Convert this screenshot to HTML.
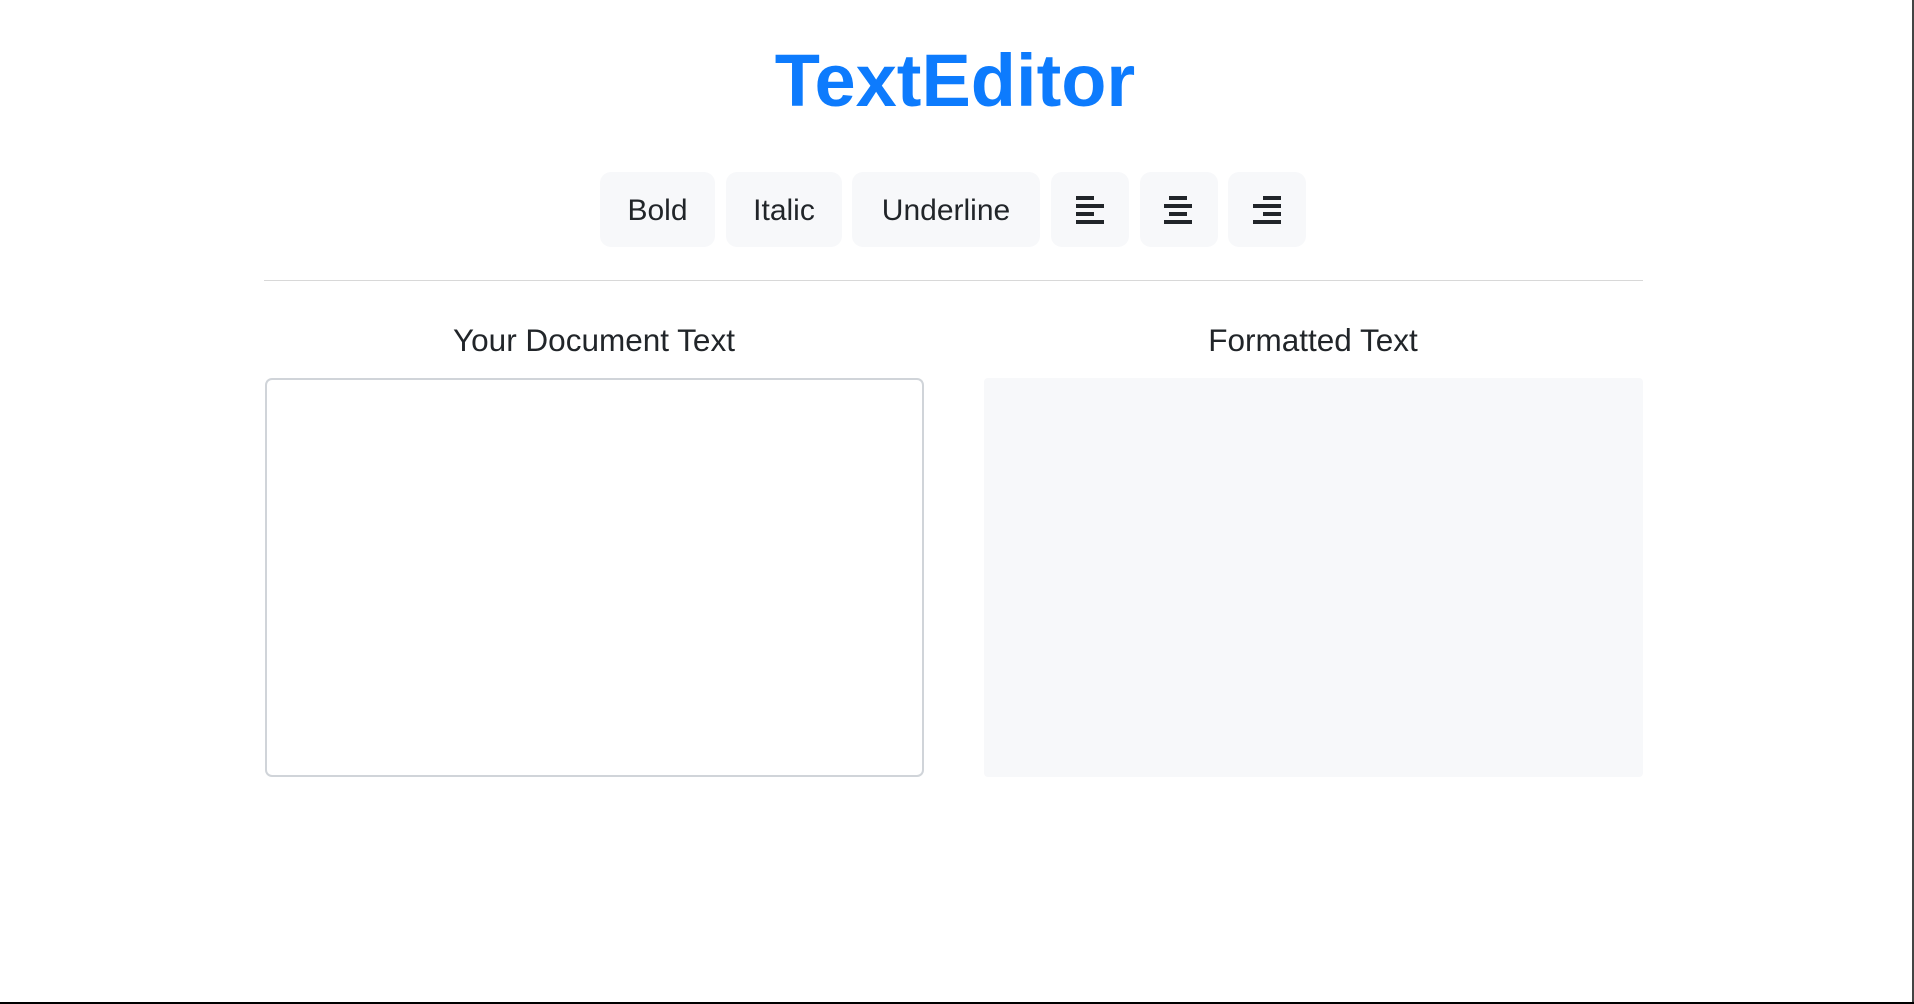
<!DOCTYPE html>
<html><head><meta charset="utf-8"><style>
html,body{margin:0;padding:0}
body{width:1914px;height:1004px;position:relative;background:#fff;font-family:"Liberation Sans",sans-serif;color:#212529;overflow:hidden}
.frame-r{position:absolute;right:0;top:0;width:2px;height:1004px;background:#444}
.frame-b{position:absolute;left:0;bottom:0;width:1914px;height:2px;background:#000}
h1{position:absolute;left:0;width:1910px;top:31px;margin:0;text-align:center;font-size:74px;font-weight:bold;color:#0d7bfd;line-height:100px}
.btn{position:absolute;top:172px;height:75px;background:#f7f8fa;border-radius:11px;font-size:30px;line-height:77px;text-align:center}
.ic{position:absolute;top:196px;width:28px;height:28px}
.ic i{position:absolute;height:4px;background:#212529}
hr{position:absolute;left:264px;width:1379px;top:280px;margin:0;border:0;border-top:1px solid #d8d8d8}
.h{position:absolute;top:320px;font-size:31.5px;line-height:40px;text-align:center;width:660px}
.ta{position:absolute;left:265px;top:378px;width:655px;height:395px;border:2px solid #d0d4d9;border-radius:7px}
.fm{position:absolute;left:984px;top:378px;width:659px;height:399px;background:#f7f8fa;border-radius:4px}
</style></head><body>
<h1>TextEditor</h1>
<div class="btn" style="left:600px;width:115px">Bold</div>
<div class="btn" style="left:726px;width:116px">Italic</div>
<div class="btn" style="left:852px;width:188px">Underline</div>
<div class="btn" style="left:1051px;width:78px"></div>
<div class="btn" style="left:1140px;width:78px"></div>
<div class="btn" style="left:1228px;width:78px"></div>
<div class="ic" style="left:1076px"><i style="left:0;top:0;width:18px"></i><i style="left:0;top:8px;width:28px"></i><i style="left:0;top:16px;width:18px"></i><i style="left:0;top:24px;width:28px"></i></div>
<div class="ic" style="left:1164px"><i style="left:5px;top:0;width:18px"></i><i style="left:0;top:8px;width:28px"></i><i style="left:5px;top:16px;width:18px"></i><i style="left:0;top:24px;width:28px"></i></div>
<div class="ic" style="left:1253px"><i style="left:10px;top:0;width:18px"></i><i style="left:0;top:8px;width:28px"></i><i style="left:10px;top:16px;width:18px"></i><i style="left:0;top:24px;width:28px"></i></div>
<hr>
<div class="h" style="left:264px">Your Document Text</div>
<div class="h" style="left:983px">Formatted Text</div>
<div class="ta"></div>
<div class="fm"></div>
<div class="frame-r"></div><div class="frame-b"></div>
</body></html>
